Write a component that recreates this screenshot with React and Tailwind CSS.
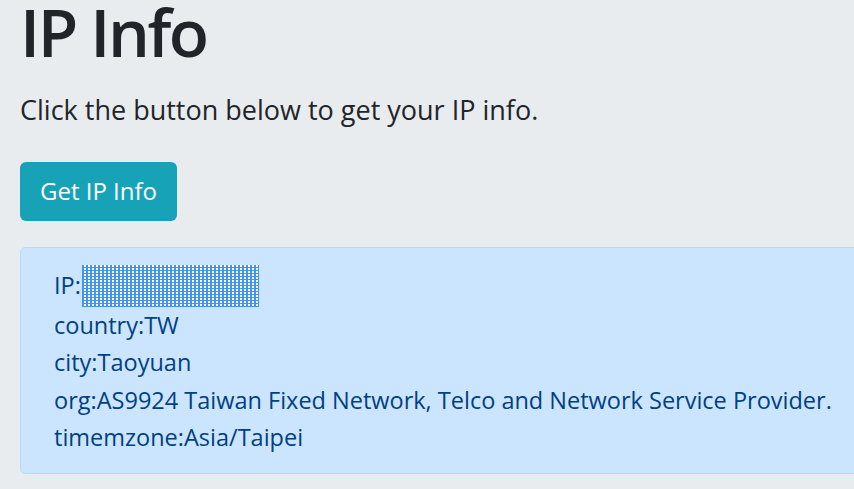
import React from 'react';

const info = [
  { label: 'country', value: 'TW' },
  { label: 'city', value: 'Taoyuan' },
  { label: 'org', value: 'AS9924 Taiwan Fixed Network, Telco and Network Service Provider.' },
  { label: 'timemzone', value: 'Asia/Taipei' },
];

export default function App() {
  return (
    <div className="h-[489px] w-[854px] overflow-hidden bg-[#e9ecef] text-[#212529] font-['Open_Sans',sans-serif]">
      <div className="pl-[20px] w-[1000px]">
        <h1 className="text-[66px] leading-[62px] font-semibold tracking-[-2.5px]">IP Info</h1>
        <p className="text-[27px] leading-[36px] mt-[29.5px]">Click the button below to get your IP info.</p>
        <button className="mt-[34px] h-[59px] w-[157px] rounded-[6px] bg-[#17a2b8] text-white text-[24px]">
          Get IP Info
        </button>
        <div className="mt-[26px] h-[227px] rounded-[5px] border border-[#b8daff] bg-[#cce5ff] text-[#004085] pl-[33px] pt-[17px] text-[23.5px] leading-[37.5px]">
          <div className="flex items-center">
            IP:
            <span className="ml-[1px] inline-block h-[42px] w-[177px] bg-[#3f96f2] bg-[repeating-linear-gradient(0deg,#3f96f2_0_1px,transparent_1px_3px),repeating-linear-gradient(90deg,#3f96f2_0_2px,#ffffff_2px_4px)]" />
          </div>
          {info.map((row) => (
            <div key={row.label}>
              {row.label}:{row.value}
            </div>
          ))}
        </div>
      </div>
    </div>
  );
}
